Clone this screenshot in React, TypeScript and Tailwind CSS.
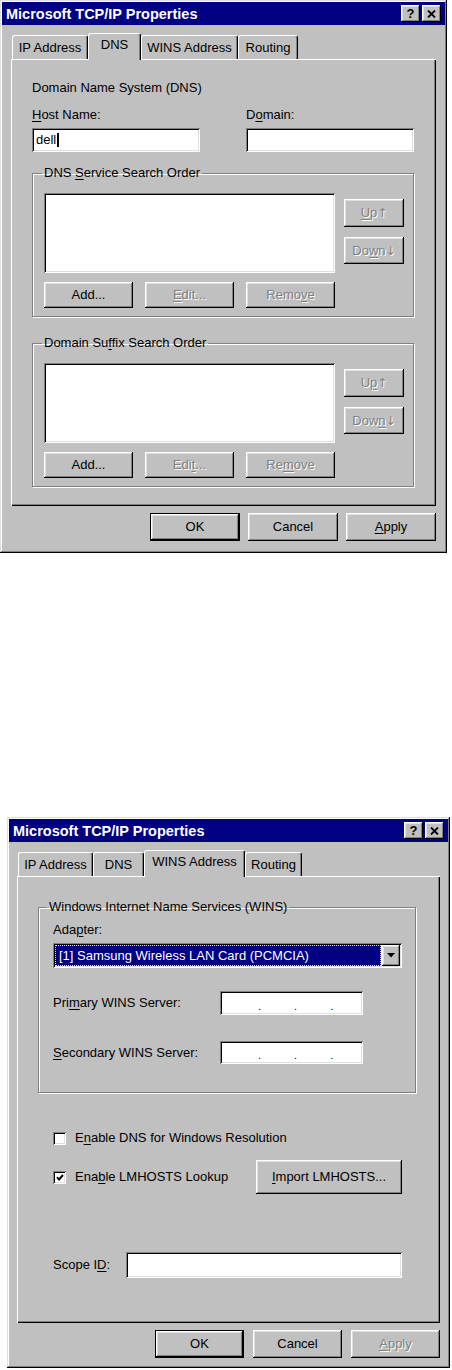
import React from 'react'

const win = 'shadow-[inset_-1px_-1px_0_#000,inset_1px_1px_0_#dfdfdf,inset_-2px_-2px_0_#808080,inset_2px_2px_0_#fff]'
const raised = 'shadow-[inset_-1px_-1px_0_#000,inset_1px_1px_0_#fff,inset_-2px_-2px_0_#808080,inset_2px_2px_0_#dfdfdf]'
const sunken = 'shadow-[inset_1px_1px_0_#808080,inset_-1px_-1px_0_#fff,inset_2px_2px_0_#000,inset_-2px_-2px_0_#dfdfdf]'
const panel = 'shadow-[inset_1px_1px_0_#fff,inset_-1px_-1px_0_#000,inset_-2px_-2px_0_#808080]'
const etched = 'border border-[#808080] shadow-[1px_1px_0_#fff,inset_1px_1px_0_#fff]'
const dim = 'text-[#808080] [text-shadow:1px_1px_0_#fff]'

const K = ({ children }: { children: React.ReactNode }) => (
  <span className="underline underline-offset-[2px] decoration-1">{children}</span>
)

const Arrow = ({ children }: { children: React.ReactNode }) => (
  <span className="font-['DejaVu_Sans',sans-serif] text-[12px]">{children}</span>
)

const Btn = ({
  children,
  className = '',
  disabled = false,
  isDefault = false,
}: {
  children: React.ReactNode
  className?: string
  disabled?: boolean
  isDefault?: boolean
}) => (
  <div
    className={`flex items-center justify-center bg-[#c0c0c0] ${raised} ${isDefault ? 'border border-black' : ''} ${
      disabled ? dim : 'text-black'
    } ${className}`}
  >
    <span>{children}</span>
  </div>
)

const TitleBar = () => (
  <div className="h-[23px] bg-[#000080] flex items-center pl-[4px] pr-[4px]">
    <span className="text-white font-bold text-[14.5px] leading-[16px]">Microsoft TCP/IP Properties</span>
    <div className="ml-auto flex gap-[2px]">
      <div className={`w-[19px] h-[17px] bg-[#c0c0c0] ${raised} flex items-center justify-center`}>
        <span className="font-bold text-[13px] leading-[13px] text-black">?</span>
      </div>
      <div className={`w-[19px] h-[17px] bg-[#c0c0c0] ${raised} flex items-center justify-center`}>
        <svg width="9" height="8" viewBox="0 0 9 8">
          <path d="M1 0.5 L8 7.5 M8 0.5 L1 7.5" stroke="#000" strokeWidth="1.8" fill="none" />
        </svg>
      </div>
    </div>
  </div>
)

const Tab = ({ label, active = false, className = '' }: { label: React.ReactNode; active?: boolean; className?: string }) => (
  <div
    className={`flex justify-center bg-[#c0c0c0] rounded-t-[3px] border-l border-t border-white border-r border-r-black shadow-[inset_-1px_0_0_#808080] ${
      active ? 'h-[27px] -mb-[1px] relative z-10 pt-[3px]' : 'h-[24px] pt-[4px]'
    } ${className}`}
  >
    {label}
  </div>
)

const SearchGroup = ({
  legend,
  up,
  down,
  edit,
  remove,
  className = '',
}: {
  legend: React.ReactNode
  up: React.ReactNode
  down: React.ReactNode
  edit: React.ReactNode
  remove: React.ReactNode
  className?: string
}) => (
  <fieldset className={`${etched} pb-[8px] ${className}`}>
    <legend className="ml-[9px] px-[2px]">{legend}</legend>
    <div className="mt-[12px] pl-[11px] flex">
      <div className={`w-[291px] h-[80px] bg-white ${sunken}`} />
      <div className="ml-[9px] mt-[6px] flex flex-col gap-[10px]">
        <Btn disabled className="w-[60px] h-[28px]">{up}</Btn>
        <Btn disabled className="w-[60px] h-[27px]">{down}</Btn>
      </div>
    </div>
    <div className="mt-[9px] pl-[11px] flex gap-[12px]">
      <Btn className="w-[89px] h-[26px]">Add...</Btn>
      <Btn disabled className="w-[89px] h-[26px]">{edit}</Btn>
      <Btn disabled className="w-[89px] h-[26px]">{remove}</Btn>
    </div>
  </fieldset>
)

const Checkbox = ({ checked = false }: { checked?: boolean }) => (
  <div className={`w-[13px] h-[13px] bg-white ${sunken} flex items-center justify-center`}>
    {checked && (
      <svg width="8" height="7" viewBox="0 0 8 7">
        <path d="M1 3.2 L3 5.5 L7 1" stroke="#000" strokeWidth="1.9" fill="none" />
      </svg>
    )}
  </div>
)

const IpBox = ({ className = '' }: { className?: string }) => (
  <div className={`w-[143px] bg-white ${sunken} flex items-end pb-[4px] pl-[38px] gap-[33px] ${className}`}>
    <span className="leading-[10px] text-[11px]">.</span>
    <span className="leading-[10px] text-[11px]">.</span>
    <span className="leading-[10px] text-[11px]">.</span>
  </div>
)

export default function App() {
  return (
    <div className="bg-white w-[452px] h-[1370px] font-['Liberation_Sans',Arial,sans-serif] text-[13px] leading-[16px] text-black">
      {/* DNS tab */}
      <div className={`w-[447px] h-[553px] bg-[#c0c0c0] p-[2px] ${win}`}>
        <TitleBar />
        <div className="ml-[10px] mt-[8px] h-[26px] flex items-end">
          <Tab label="IP Address" className="w-[76px]" />
          <Tab label="DNS" active className="w-[53px]" />
          <Tab label="WINS Address" className="w-[97px]" />
          <Tab label="Routing" className="w-[60px]" />
        </div>
        <div className={`ml-[9px] w-[425px] h-[447px] ${panel} pt-[21px] pl-[21px] pr-[22px]`}>
          <div>Domain Name System (DNS)</div>
          <div className="mt-[11px] flex justify-between">
            <div className="w-[168px]">
              <div>
                <K>H</K>ost Name:
              </div>
              <div className={`mt-[5px] h-[24px] bg-white ${sunken} flex items-center pl-[4px]`}>
                <span>dell</span>
                <span className="ml-[1px] w-[2px] h-[14px] bg-black" />
              </div>
            </div>
            <div className="w-[168px]">
              <div>
                D<K>o</K>main:
              </div>
              <div className={`mt-[5px] h-[24px] bg-white ${sunken}`} />
            </div>
          </div>
          <SearchGroup
            className="mt-[13px]"
            legend={
              <>
                DNS <K>S</K>ervice Search Order
              </>
            }
            up={
              <>
                <K>U</K>p<Arrow>↑</Arrow>
              </>
            }
            down={
              <>
                Do<K>w</K>n<Arrow>↓</Arrow>
              </>
            }
            edit={
              <>
                <K>E</K>dit...
              </>
            }
            remove={
              <>
                Remo<K>v</K>e
              </>
            }
          />
          <SearchGroup
            className="mt-[18px]"
            legend={
              <>
                Domain Su<K>f</K>fix Search Order
              </>
            }
            up={
              <>
                U<K>p</K><Arrow>↑</Arrow>
              </>
            }
            down={
              <>
                Dow<K>n</K><Arrow>↓</Arrow>
              </>
            }
            edit={
              <>
                Edi<K>t</K>...
              </>
            }
            remove={
              <>
                Re<K>m</K>ove
              </>
            }
          />
        </div>
        <div className="ml-[9px] w-[425px] mt-[7px] flex justify-end gap-[8px]">
          <Btn isDefault className="w-[90px] h-[28px]">OK</Btn>
          <Btn className="w-[90px] h-[28px]">Cancel</Btn>
          <Btn className="w-[90px] h-[28px]">
            <K>A</K>pply
          </Btn>
        </div>
      </div>

      {/* WINS tab */}
      <div className={`ml-[7px] mt-[264px] w-[443px] h-[551px] bg-[#c0c0c0] p-[2px] ${win}`}>
        <TitleBar />
        <div className="ml-[9px] mt-[8px] h-[26px] flex items-end">
          <Tab label="IP Address" className="w-[75px]" />
          <Tab label="DNS" className="w-[51px]" />
          <Tab label="WINS Address" active className="w-[101px]" />
          <Tab label="Routing" className="w-[57px]" />
        </div>
        <div className={`ml-[8px] w-[423px] h-[447px] ${panel} pt-[23px] pl-[21px]`}>
          <fieldset className={`${etched} w-[378px] pb-[28px]`}>
            <legend className="ml-[8px] px-[2px]">Windows Internet Name Services (WINS)</legend>
            <div className="pl-[14px]">
              <div className="mt-[7px]">
                Ada<K>p</K>ter:
              </div>
              <div className={`mt-[5px] w-[349px] h-[25px] bg-white ${sunken} flex items-center pl-[2px] pr-[2px]`}>
                <div className="flex-1 h-[21px] bg-[#000080] border border-dotted border-[#e8e8a0] flex items-center pl-[3px] text-white">
                  [1] Samsung Wireless LAN Card (PCMCIA)
                </div>
                <div className={`ml-[1px] w-[18px] h-[21px] bg-[#c0c0c0] ${raised} flex items-center justify-center`}>
                  <svg width="8" height="5" viewBox="0 0 8 5">
                    <path d="M0 0 H8 L4 4.5 Z" fill="#000" />
                  </svg>
                </div>
              </div>
              <div className="mt-[23px] flex items-center">
                <div className="w-[167px]">
                  Pri<K>m</K>ary WINS Server:
                </div>
                <IpBox className="h-[24px]" />
              </div>
              <div className="mt-[26px] flex items-center">
                <div className="w-[167px]">
                  <K>S</K>econdary WINS Server:
                </div>
                <IpBox className="h-[23px]" />
              </div>
            </div>
          </fieldset>
          <div className="ml-[15px] mt-[37px] h-[16px] flex items-center">
            <Checkbox />
            <span className="ml-[9px]">
              E<K>n</K>able DNS for Windows Resolution
            </span>
          </div>
          <div className="ml-[15px] mt-[14px] w-[349px] h-[34px] flex items-center">
            <Checkbox checked />
            <span className="ml-[9px]">
              Ena<K>b</K>le LMHOSTS Lookup
            </span>
            <Btn className="ml-auto w-[146px] h-[34px]">
              <K>I</K>mport LMHOSTS...
            </Btn>
          </div>
          <div className="ml-[15px] mt-[58px] w-[349px] flex items-center">
            <div className="w-[73px]">
              Scope I<K>D</K>:
            </div>
            <div className={`w-[276px] h-[26px] bg-white ${sunken}`} />
          </div>
        </div>
        <div className="ml-[8px] w-[423px] mt-[7px] flex justify-end gap-[9px]">
          <Btn isDefault className="w-[89px] h-[28px]">OK</Btn>
          <Btn className="w-[89px] h-[28px]">Cancel</Btn>
          <Btn disabled className="w-[89px] h-[28px]">
            <K>A</K>pply
          </Btn>
        </div>
      </div>
    </div>
  )
}
